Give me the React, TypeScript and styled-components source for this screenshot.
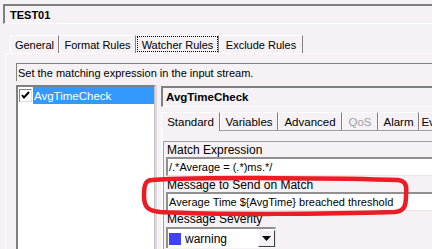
import * as React from 'react';
import styled, { createGlobalStyle } from 'styled-components';

const GlobalStyle = createGlobalStyle`
  html, body {
    margin: 0;
    padding: 0;
    overflow: hidden;
    background: #f5f1f5;
  }
  body {
    font-family: "Liberation Sans", Arial, sans-serif;
    font-size: 11px;
    color: #000;
  }
`

const Window = styled.div`
  position: relative;
  width: 470px;
  height: 249px;
  padding: 4px 0 0 3px;
  box-sizing: border-box;
  display: flex;
  flex-direction: column;
  overflow: hidden;
`

const TitleField = styled.div`
  height: 20px;
  display: flex;
  align-items: center;
  padding-left: 5px;
  box-sizing: border-box;
  border-top: 2px solid #808080;
  border-left: 2px solid #808080;
  border-bottom: 1px solid #ffffff;
  font-weight: bold;
  font-size: 11px;
`

const TabStrip = styled.div`
  display: flex;
  margin-top: 11px;
  padding-left: 7px;
  height: 18px;
`

const Tab = styled.div<{ $focus?: boolean; $disabled?: boolean; $open?: boolean; $w: number }>`
  width: ${p => p.$w}px;
  height: ${p => (p.$open ? 19 : 18)}px;
  margin-bottom: ${p => (p.$open ? -1 : 0)}px;
  background: #f5f1f5;
  box-sizing: border-box;
  display: flex;
  align-items: center;
  justify-content: center;
  padding-bottom: ${p => (p.$open ? 1 : 0)}px;
  border-top: 1px solid #ffffff;
  border-left: 1px solid #ffffff;
  border-right: 1px solid #808080;
  color: ${p => (p.$disabled ? '#a0a0a0' : '#000')};
  white-space: nowrap;
  overflow: hidden;
  outline: ${p => (p.$focus ? '1px dotted #000' : 'none')};
  outline-offset: -2px;
`

const SubTabLabel = styled.span`
  font-size: 11.5px;
`

const TabPage = styled.div`
  flex: 1;
  display: flex;
  flex-direction: column;
  margin-left: 2px;
  border-top: 1px solid #ffffff;
  border-left: 1px solid #ffffff;
  padding: 9px 0 0 10px;
`

const Hint = styled.div`
  height: 18px;
  display: flex;
  align-items: center;
  padding-left: 1px;
  border-top: 1px solid #808080;
  border-left: 1px solid #808080;
  box-sizing: border-box;
`

const Split = styled.div`
  flex: 1;
  display: flex;
  margin-top: 4px;
`

const RuleList = styled.div`
  width: 139px;
  background: #ffffff;
  border-top: 2px solid #808080;
  border-left: 2px solid #808080;
  border-right: 1px solid #c0c0c0;
  box-sizing: border-box;
`

const RuleItem = styled.div`
  display: flex;
  align-items: center;
  height: 17px;
  padding-left: 1px;
`

const Check = styled.div`
  width: 13px;
  height: 13px;
  box-sizing: border-box;
  border-top: 1px solid #808080;
  border-left: 1px solid #808080;
  border-right: 1px solid #e0e0e0;
  border-bottom: 1px solid #e0e0e0;
  background: #fff;
  display: flex;
  align-items: center;
  justify-content: center;
  margin-right: 1px;
`

const ItemLabel = styled.div<{ $selected?: boolean }>`
  flex: 1;
  height: 17px;
  display: flex;
  align-items: center;
  padding-left: 1px;
  font-size: 11.5px;
  color: ${p => (p.$selected ? '#ffffff' : '#000')};
  background: ${p => (p.$selected ? '#3399ff' : 'transparent')};
`

const Splitter = styled.div`
  width: 6px;
  border-left: 2px solid #dcd8dc;
  box-sizing: border-box;
`

const Detail = styled.div`
  flex: 1;
  display: flex;
  flex-direction: column;
  padding-top: 1px;
`

const DetailTitle = styled.div`
  height: 21px;
  display: flex;
  align-items: center;
  padding-left: 3px;
  box-sizing: border-box;
  border-top: 2px solid #808080;
  border-left: 2px solid #808080;
  border-bottom: 1px solid #ffffff;
  font-weight: bold;
  font-size: 11.5px;
`

const SubTabStrip = styled.div`
  display: flex;
  margin-top: 5px;
  height: 18px;
  border-bottom: 1px solid #a0a0a0;
`

const SubPage = styled.div`
  flex: 1;
  display: flex;
  flex-direction: column;
  border-left: 2px solid #ffffff;
  padding-top: 10px;
`

const Group = styled.div`
  flex: 1;
  display: flex;
  flex-direction: column;
  border-top: 1px solid #a0a0a0;
  border-left: 1px solid #a0a0a0;
  padding: 2px 0 0 2px;
`

const FieldLabel = styled.div<{ $gap: number }>`
  height: 12px;
  line-height: 12px;
  margin-top: ${p => p.$gap}px;
  font-size: 12px;
  padding-left: 1px;
`

const Input = styled.div`
  height: 19px;
  margin-top: 1px;
  display: flex;
  align-items: center;
  padding-left: 1px;
  box-sizing: border-box;
  background: #ffffff;
  border-top: 2px solid #909090;
  border-left: 2px solid #909090;
  border-bottom: 1px solid #e8e4e8;
  font-size: 11px;
  white-space: nowrap;
`

const Select = styled.div`
  width: 110px;
  height: 21px;
  margin-top: 2px;
  display: flex;
  align-items: center;
  box-sizing: border-box;
  background: #ffffff;
  border-top: 2px solid #909090;
  border-left: 2px solid #909090;
  border-right: 1px solid #e8e4e8;
  font-size: 12px;
`

const Swatch = styled.div`
  width: 12px;
  height: 12px;
  background: #4040ff;
  margin: 0 4px 0 1px;
`

const SelectText = styled.div`
  flex: 1;
`

const DropButton = styled.div`
  width: 17px;
  height: 17px;
  box-sizing: border-box;
  background: #f5f1f5;
  border-top: 1px solid #ffffff;
  border-left: 1px solid #ffffff;
  border-right: 1px solid #404040;
  border-bottom: 1px solid #404040;
  display: flex;
  align-items: center;
  justify-content: center;
`

const Overlay = styled.svg`
  position: absolute;
  left: 0;
  top: 0;
  pointer-events: none;
`

const App = () => {
  return (
    <React.Fragment>
      <GlobalStyle />
      <Window>
        <TitleField>TEST01</TitleField>

        <TabStrip>
          <Tab $w={49}>General</Tab>
          <Tab $w={77}>Format Rules</Tab>
          <Tab $w={83} $focus>Watcher Rules</Tab>
          <Tab $w={84}>Exclude Rules</Tab>
        </TabStrip>

        <TabPage>
          <Hint>Set the matching expression in the input stream.</Hint>

          <Split>
            <RuleList>
              <RuleItem>
                <Check>
                  <svg width="9" height="9" viewBox="0 0 9 9">
                    <path d="M1 4 L3 6.5 L8 1" stroke="#000" strokeWidth="2" fill="none" />
                  </svg>
                </Check>
                <ItemLabel $selected>AvgTimeCheck</ItemLabel>
              </RuleItem>
            </RuleList>

            <Splitter />

            <Detail>
              <DetailTitle>AvgTimeCheck</DetailTitle>

              <SubTabStrip>
                <Tab $w={59} $open><SubTabLabel>Standard</SubTabLabel></Tab>
                <Tab $w={58}><SubTabLabel>Variables</SubTabLabel></Tab>
                <Tab $w={64}><SubTabLabel>Advanced</SubTabLabel></Tab>
                <Tab $w={36} $disabled><SubTabLabel>QoS</SubTabLabel></Tab>
                <Tab $w={41}><SubTabLabel>Alarm</SubTabLabel></Tab>
                <Tab $w={40}><SubTabLabel>Events</SubTabLabel></Tab>
              </SubTabStrip>

              <SubPage>
                <Group>
                  <FieldLabel $gap={0}>Match Expression</FieldLabel>
                  <Input>/.*Average = (.*)ms.*/</Input>
                  <FieldLabel $gap={3}>Message to Send on Match</FieldLabel>
                  <Input>Average Time ${'{'}AvgTime{'}'} breached threshold</Input>
                  <FieldLabel $gap={2}>Message Severity</FieldLabel>
                  <Select>
                    <Swatch />
                    <SelectText>warning</SelectText>
                    <DropButton>
                      <svg width="9" height="5" viewBox="0 0 9 5">
                        <path d="M0 0 H9 L4.5 5 Z" fill="#000" />
                      </svg>
                    </DropButton>
                  </Select>
                </Group>
              </SubPage>
            </Detail>
          </Split>
        </TabPage>

        <Overlay width="432" height="249" viewBox="0 0 432 249">
          <path
            d="M152 180 C200 177, 350 178, 398 180 C406 181, 407 186, 406 195 C406 205, 405 211, 395 212 C330 214, 220 215, 160 212 C148 211, 144 207, 144 196 C144 186, 145 180, 152 180 Z"
            stroke="#ec1c24"
            strokeWidth="4.5"
            fill="none"
          />
        </Overlay>
      </Window>
    </React.Fragment>
  );
};

export default App;
